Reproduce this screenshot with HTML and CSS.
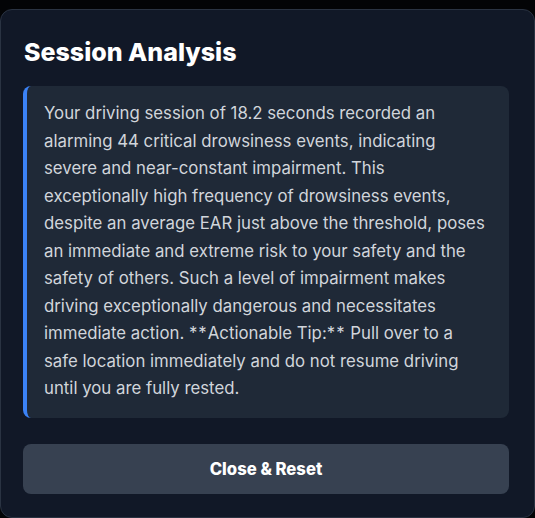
FILE: index.html
```html
<!DOCTYPE html>
<html lang="en">
<head>
<meta charset="utf-8">
<title>Session Analysis</title>
<link rel="stylesheet" href="styles.css">
</head>
<body>
<div class="modal">
  <h2 class="modal-title">Session Analysis</h2>
  <div class="analysis">
    <p>Your driving session of 18.2 seconds recorded an alarming 44 critical drowsiness events, indicating severe and near-constant impairment. This exceptionally high frequency of drowsiness events, despite an average EAR just above the threshold, poses an immediate and extreme risk to your safety and the safety of others. Such a level of impairment makes driving exceptionally dangerous and necessitates immediate action. <span class="stars">**</span>Actionable Tip:<span class="stars">**</span> Pull over to a safe location immediately and do not resume driving until you are fully rested.</p>
  </div>
  <button class="close-btn" type="button">Close &amp; Reset</button>
</div>
</body>
</html>
```

FILE: styles.css
```css
html, body {
  margin: 0;
  padding: 0;
  background: #030406;
  height: 100%;
  overflow: hidden;
}
body {
  font-family: Inter, "Noto Sans", sans-serif;
}
.modal {
  box-sizing: border-box;
  margin-top: 9px;
  width: 535px;
  height: 509px;
  background: #111827;
  border: 1px solid #2a3342;
  border-radius: 12px;
  padding: 24px 25px 0 22px;
  display: flex;
  flex-direction: column;
}
.modal-title {
  margin: 0 0 16px 1px;
  font-size: 25px;
  line-height: 36px;
  font-weight: 800;
  color: #ffffff;
}
.analysis {
  box-sizing: border-box;
  height: 332px;
  background: #1f2937;
  border-left: 4px solid #3b82f6;
  border-radius: 8px;
  padding: 14px 22px 14px 17px;
}
.analysis p {
  margin: 0;
  font-size: 16.8px;
  line-height: 27.5px;
  color: #d1d5db;
}
.stars {
  letter-spacing: 1px;
}
.close-btn {
  margin-top: 26px;
  height: 50px;
  border: none;
  border-radius: 8px;
  background: #374151;
  color: #ffffff;
  font-family: Inter, "Noto Sans", sans-serif;
  font-size: 16.7px;
  font-weight: 800;
  cursor: pointer;
}
```
